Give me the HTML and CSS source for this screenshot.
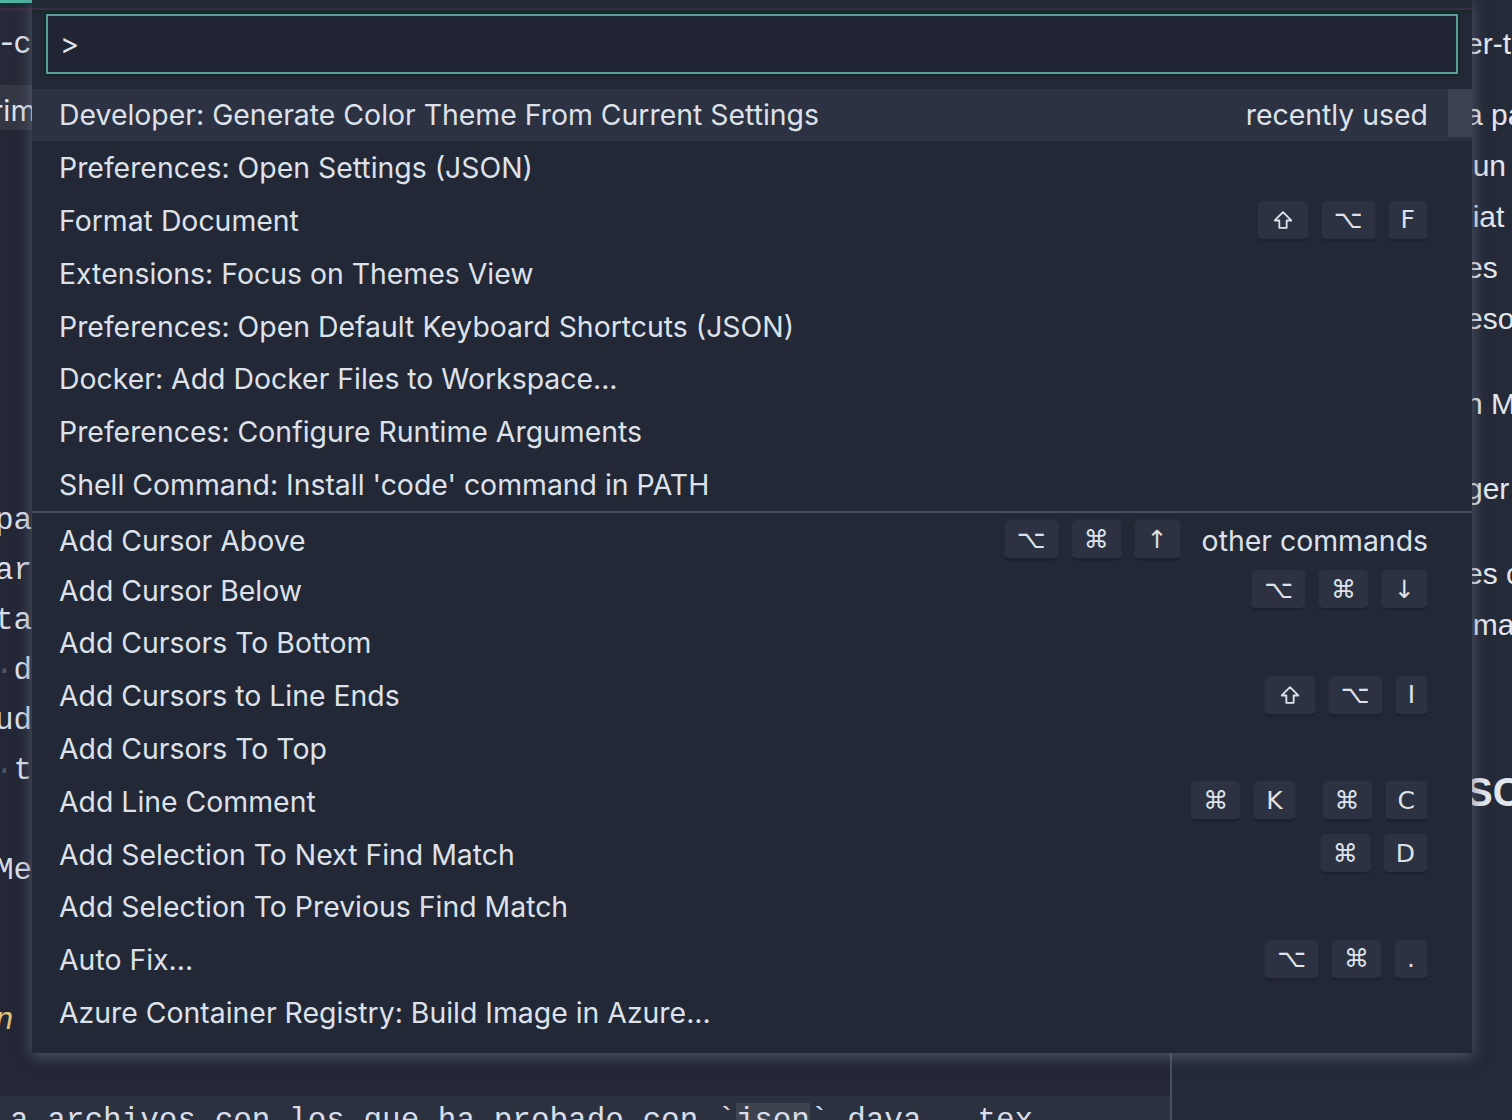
FILE: index.html
```html
<!DOCTYPE html>
<html lang="es">
<head>
<meta charset="utf-8">
<title>Command Palette</title>
<link rel="stylesheet" href="styles.css">
</head>
<body>
<div class="screen">
  <div class="workbench">
    <div class="editor">
      <div class="tabbar"><div class="tab"><span class="tab-title">-color-theme.json</span></div></div>
      <div class="breadcrumbs">rimary-color-theme</div>
      <div class="code">
        <div class="ln"></div>
        <div class="ln"></div>
        <div class="ln"></div>
        <div class="ln"></div>
        <div class="ln"></div>
        <div class="ln"></div>
        <div class="ln"></div>
        <div class="ln">para cambiar el tema de color</div>
        <div class="ln">ar los colores del editor</div>
        <div class="ln">ta es la configuración</div>
        <div class="ln"><span class="ws">·</span>de la paleta</div>
        <div class="ln">ude usar otros archivos</div>
        <div class="ln"><span class="ws">·</span>tema oscuro</div>
        <div class="ln"></div>
        <div class="ln">Me gusta este tema</div>
        <div class="ln"></div>
        <div class="ln"></div>
        <div class="ln"><span class="kw">n</span></div>
        <div class="ln"></div>
        <div class="ln current">a archivos con los que ha probado con `<span class="match">json</span>` dava.. tex</div>
      </div>
    </div>
    <div class="split"></div>
    <div class="preview">
      <div class="pl">er-theme</div>
      <div class="para first">
        <div class="pl">a paleta</div>
        <div class="pl">iun</div>
        <div class="pl">liat</div>
        <div class="pl">es</div>
        <div class="pl">eso</div>
      </div>
      <div class="para"><div class="pl">n Mo</div></div>
      <div class="para"><div class="pl">ger</div></div>
      <div class="para">
        <div class="pl">es c</div>
        <div class="pl">ima</div>
      </div>
      <div class="heading">SC</div>
    </div>
  </div>

  <div class="palette">
    <div class="input">&gt;</div>
    <div class="list">
      <div class="row focused"><span class="label">Developer: Generate Color Theme From Current Settings</span><span class="desc">recently used</span></div>
      <div class="row"><span class="label">Preferences: Open Settings (JSON)</span></div>
      <div class="row"><span class="label">Format Document</span><span class="keys"><span class="chord"><span class="key wide"><svg class="shift" viewBox="0 0 24 24"><path d="M12 3.5 L3 12.5 H8 V20.5 H16 V12.5 H21 Z"/></svg></span><span class="key">⌥</span><span class="key">F</span></span></span></div>
      <div class="row"><span class="label">Extensions: Focus on Themes View</span></div>
      <div class="row"><span class="label">Preferences: Open Default Keyboard Shortcuts (JSON)</span></div>
      <div class="row"><span class="label">Docker: Add Docker Files to Workspace...</span></div>
      <div class="row"><span class="label">Preferences: Configure Runtime Arguments</span></div>
      <div class="row"><span class="label">Shell Command: Install 'code' command in PATH</span></div>
      <div class="row separator"><span class="label">Add Cursor Above</span><span class="keys"><span class="chord"><span class="key">⌥</span><span class="key">⌘</span><span class="key">↑</span></span></span><span class="desc">other commands</span></div>
      <div class="row"><span class="label">Add Cursor Below</span><span class="keys"><span class="chord"><span class="key">⌥</span><span class="key">⌘</span><span class="key">↓</span></span></span></div>
      <div class="row"><span class="label">Add Cursors To Bottom</span></div>
      <div class="row"><span class="label">Add Cursors to Line Ends</span><span class="keys"><span class="chord"><span class="key wide"><svg class="shift" viewBox="0 0 24 24"><path d="M12 3.5 L3 12.5 H8 V20.5 H16 V12.5 H21 Z"/></svg></span><span class="key">⌥</span><span class="key">I</span></span></span></div>
      <div class="row"><span class="label">Add Cursors To Top</span></div>
      <div class="row"><span class="label">Add Line Comment</span><span class="keys"><span class="chord"><span class="key">⌘</span><span class="key">K</span></span><span class="chord"><span class="key">⌘</span><span class="key">C</span></span></span></div>
      <div class="row"><span class="label">Add Selection To Next Find Match</span><span class="keys"><span class="chord"><span class="key">⌘</span><span class="key">D</span></span></span></div>
      <div class="row"><span class="label">Add Selection To Previous Find Match</span></div>
      <div class="row"><span class="label">Auto Fix...</span><span class="keys"><span class="chord"><span class="key">⌥</span><span class="key">⌘</span><span class="key">.</span></span></span></div>
      <div class="row"><span class="label">Azure Container Registry: Build Image in Azure...</span></div>
      <div class="scroll-thumb"></div>
    </div>
  </div>
</div>
</body>
</html>
```

FILE: styles.css
```css
* { box-sizing: border-box; }
html, body { margin: 0; padding: 0; }
body {
  width: 1512px;
  height: 1120px;
  overflow: hidden;
  background: #242837;
  font-family: "Inter", "DejaVu Sans", sans-serif;
  color: #dde2ea;
}
.screen {
  position: relative;
  width: 1512px;
  height: 1120px;
  overflow: hidden;
}
.workbench {
  display: flex;
  height: 1120px;
}
.editor {
  width: 1170px;
  flex: none;
  background: #232736;
  display: flex;
  flex-direction: column;
  overflow: hidden;
}
.tabbar {
  height: 85px;
  flex: none;
  background: linear-gradient(to bottom, #1f2a34 0, #1f2a34 8px, #3a2c42 8px, #3a2c42 10px, #262a38 12px);
  display: flex;
}
.tab {
  width: 300px;
  border-top: 3px solid #4fb3a0;
  display: flex;
  align-items: center;
  padding-bottom: 4px;
  font-size: 30px;
  white-space: nowrap;
}
.breadcrumbs {
  height: 45px;
  flex: none;
  background: #343845;
  font-size: 29px;
  line-height: 52px;
  white-space: nowrap;
  margin-left: -8px;
}
.code {
  padding-top: 16px;
  margin-left: -5px;
  font-family: "Liberation Mono", "DejaVu Sans Mono", monospace;
  font-size: 31px;
  color: #d8dee9;
}
.ln {
  height: 50px;
  line-height: 50px;
  white-space: nowrap;
}
.ws { color: #4f5566; }
.kw { color: #e5c07b; font-style: italic; }
.current { background: #2c3140; padding-left: 15px; }
.match { background: #3e4350; }
.split {
  width: 2px;
  flex: none;
  background: #4a5062;
}
.preview {
  flex: 1;
  background: #252a38;
  padding-top: 18px;
  padding-left: 294px;
  font-family: "Liberation Sans", "Helvetica", sans-serif;
  font-size: 30px;
  color: #e2e6ed;
  white-space: nowrap;
  overflow: hidden;
}
.pl { height: 51px; line-height: 51px; }
.para { margin-top: 34px; }
.para.first { margin-top: 20px; }
.heading {
  margin-top: 117px;
  font-size: 40px;
  font-weight: bold;
  line-height: 51px;
  height: 51px;
}

/* Command palette */
.palette {
  position: absolute;
  left: 32px;
  top: 0;
  width: 1440px;
  height: 1053px;
  padding-top: 14px;
  background: linear-gradient(to bottom, #1f2a34 0, #1f2a34 8px, #3a2c42 8px, #3a2c42 10px, #1c2a30 10px, #1c2a30 13px, #232837 13px);
  box-shadow: 0 3px 14px rgba(98, 104, 126, 0.75);
  z-index: 2;
}
.input {
  margin: 0 14px;
  height: 60px;
  border: 2px solid #5b9e98;
  box-shadow: 0 0 0 2px #13272c;
  background: #212533;
  padding-left: 12px;
  font-size: 29px;
  line-height: 56px;
  color: #dde2ea;
}
.list {
  position: relative;
  margin-top: 14.6px;
}
.row {
  height: 52.8px;
  display: flex;
  align-items: center;
  padding: 0 44px 0 27px;
  font-size: 28.4px;
  color: #dde2ea;
  white-space: nowrap;
}
.row.focused { background: #2c3242; }
.row.separator { border-top: 2px solid #4a5062; padding-top: 4px; }
.label { flex: 1; }
.desc { margin-left: 21px; }
.keys {
  display: flex;
  gap: 26px;
}
.chord {
  display: flex;
  gap: 12px;
}
.key {
  height: 42px;
  min-width: 32px;
  padding: 0 12px;
  display: flex;
  align-items: center;
  justify-content: center;
  background: #2c3241;
  border: 1px solid #272b39;
  border-bottom: 3px solid #1e2230;
  border-radius: 6px;
  font-family: "DejaVu Sans", "Inter", sans-serif;
  font-size: 25px;
  color: #dde2ea;
}
.key.wide { padding: 0 14px; }
.shift {
  width: 22px;
  height: 22px;
  fill: none;
  stroke: #dde2ea;
  stroke-width: 2;
  stroke-linejoin: round;
}
.scroll-thumb {
  position: absolute;
  right: 0;
  top: 0;
  width: 24px;
  height: 48px;
  background: #3d4252;
}
```
